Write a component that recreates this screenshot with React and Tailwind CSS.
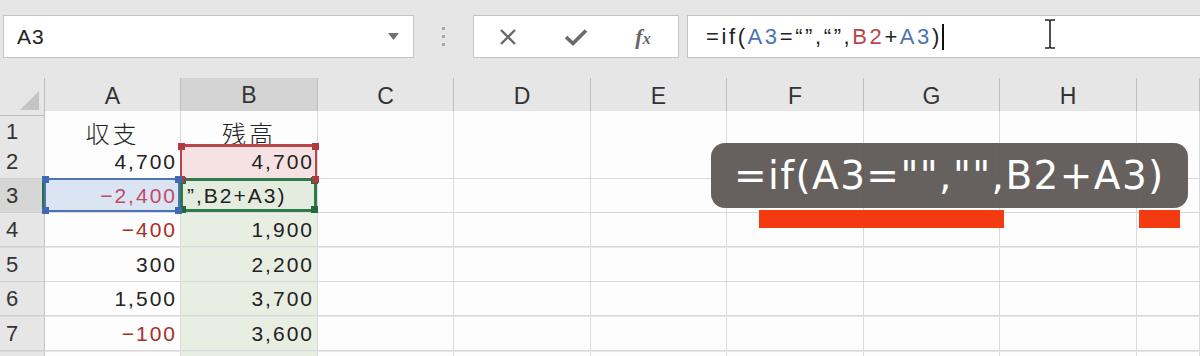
import React from 'react';

const GRID = 'grid grid-cols-[45px_136px_137px_136px_137px_136px_137px_136px_137px_63px]';
const cellFont = "font-['Liberation_Sans','Noto_Sans_CJK_JP',sans-serif]";

function Corners({ color }) {
  return (
    <>
      <span className={`absolute -left-[4px] -top-[4px] w-[7px] h-[7px] ${color}`} />
      <span className={`absolute -right-[4px] -top-[4px] w-[7px] h-[7px] ${color}`} />
      <span className={`absolute -left-[4px] -bottom-[4px] w-[7px] h-[7px] ${color}`} />
      <span className={`absolute -right-[4px] -bottom-[4px] w-[7px] h-[7px] ${color}`} />
    </>
  );
}

const rows = [
  { n: '1', h: 'h-[34px]', a: '収支', b: '残高', jp: true },
  { n: '2', h: 'h-[34px]', a: '4,700', b: '4,700', bRef: 'red' },
  { n: '3', h: 'h-[34px]', a: '−2,400', aColor: 'text-[#c24868]', b: '”,B2+A3)', active: true },
  { n: '4', h: 'h-[35px]', a: '−400', aColor: 'text-[#a5302a]', b: '1,900', tint: true },
  { n: '5', h: 'h-[34px]', a: '300', b: '2,200', tint: true },
  { n: '6', h: 'h-[35px]', a: '1,500', b: '3,700', tint: true },
  { n: '7', h: 'h-[35px]', a: '−100', aColor: 'text-[#a5302a]', b: '3,600', tint: true },
  { n: '', h: 'h-[34px]', a: '', b: '', tint: true },
];

const headers = ['A', 'B', 'C', 'D', 'E', 'F', 'G', 'H', ''];

function Row({ r }) {
  const isActive = r.active;
  const rowHead = isActive
    ? 'bg-[#d6d6d6] border-r-[3px] border-r-[#217346]'
    : 'bg-[#e6e6e6] border-r border-r-[#c2c2c2]';
  let aCell = 'bg-[#fdfdfd]';
  let bCell = 'bg-[#fdfdfd]';
  if (isActive) {
    aCell = 'bg-[#dbe4f3]';
    bCell = 'bg-[#e4ecdf]';
  }
  if (r.bRef === 'red') bCell = 'bg-[#f6e2e2]';
  if (r.tint) bCell = 'bg-[#e9eee3]';
  const textBase = `text-[21px] tracking-[2px] ${cellFont}`;
  return (
    <div className={`${GRID} ${r.h}`}>
      <div className={`${rowHead} border-b border-b-[#cfcfcf] flex items-center pl-[6px] text-[22px] text-[#333] ${cellFont}`}>
        {r.n}
      </div>
      <div className={`relative ${aCell} border-r border-b border-[#d9d9d9] flex items-center ${r.jp ? 'justify-center' : 'justify-end pr-[3px]'}`}>
        {r.jp ? (
          <span className="text-[24px] text-[#222] tracking-[3px] font-['Noto_Sans_CJK_JP',sans-serif] font-light mt-[4px]">{r.a}</span>
        ) : (
          <span className={`${textBase} ${r.aColor || 'text-[#222]'}`}>{r.a}</span>
        )}
        {isActive && (
          <div className="absolute -left-px -top-px right-0 bottom-0 border-[2px] border-[#4d74b0] z-30 pointer-events-none">
            <Corners color="bg-[#3f6ab0]" />
          </div>
        )}
      </div>
      <div className={`relative ${bCell} border-r border-b border-[#d9d9d9] flex items-center ${r.jp ? 'justify-center' : isActive ? 'justify-start pl-[6px]' : 'justify-end pr-[3px]'}`}>
        {r.jp ? (
          <span className="text-[24px] text-[#222] tracking-[3px] font-['Noto_Sans_CJK_JP',sans-serif] font-light mt-[4px]">{r.b}</span>
        ) : (
          <span className={`${textBase} text-[#222]`}>{r.b}</span>
        )}
        {r.bRef === 'red' && (
          <div className="absolute -left-px -top-px right-0 -bottom-px border-t-[3px] border-l-[2px] border-r-[2px] border-[#b5474b] z-20 pointer-events-none">
            <Corners color="bg-[#b03a3e]" />
          </div>
        )}
        {isActive && (
          <div className="absolute -left-px -top-px right-0 bottom-0 border-[3px] border-[#2f7a4b] z-10 pointer-events-none">
            <Corners color="bg-[#1f6b3c]" />
          </div>
        )}
      </div>
      {[0, 1, 2, 3, 4, 5, 6, 7].map((i) => (
        <div key={i} className="bg-[#fdfdfd] border-r border-b border-[#d9d9d9]" />
      ))}
    </div>
  );
}

export default function App() {
  return (
    <div className="relative w-[1200px] h-[356px] overflow-hidden bg-[#e6e6e6] font-['Liberation_Sans',sans-serif]">
      {/* Formula bar */}
      <div className="h-[78px] flex items-start pt-[15px]">
        <div className="ml-[3px] w-[411px] h-[43px] bg-white border border-[#c4c4c4] flex items-center justify-between pl-[13px] pr-[14px]">
          <span className="text-[21px] text-[#222] tracking-[1px]">A3</span>
          <svg width="11" height="7" viewBox="0 0 11 7">
            <path d="M0 0 H11 L5.5 7 Z" fill="#707070" />
          </svg>
        </div>
        <div className="w-[59px] h-[43px] flex flex-col items-center justify-center gap-[5px]">
          <span className="w-[3px] h-[3px] bg-[#a8a8a8]" />
          <span className="w-[3px] h-[3px] bg-[#a8a8a8]" />
          <span className="w-[3px] h-[3px] bg-[#a8a8a8]" />
        </div>
        <div className="w-[206px] h-[43px] bg-white border border-[#c4c4c4] flex items-center">
          <div className="w-[68px] flex justify-center">
            <svg width="18" height="18" viewBox="0 0 18 18">
              <path d="M2 2 L16 16 M16 2 L2 16" stroke="#6a6a6a" strokeWidth="2.4" />
            </svg>
          </div>
          <div className="w-[67px] flex justify-center">
            <svg width="24" height="18" viewBox="0 0 24 18">
              <path d="M2 9 L9 15.5 L22 2.5" stroke="#6a6a6a" strokeWidth="3.6" fill="none" />
            </svg>
          </div>
          <div className="w-[68px] flex justify-center">
            <span className="font-['Liberation_Serif',serif] italic font-bold text-[22px] text-[#666] leading-none">
              f<span className="text-[16px]">x</span>
            </span>
          </div>
        </div>
        <div className="relative ml-[8px] flex-1 h-[43px] bg-white border border-r-0 border-[#c4c4c4] flex items-center pl-[18px]">
          <span className="text-[22px] tracking-[2.6px] text-[#222]">
            =if(<span className="text-[#4a74b3]">A3</span>=“”,“”,<span className="text-[#b5474b]">B2</span>+<span className="text-[#4a74b3]">A3</span>)
          </span>
          <span className="w-[2px] h-[26px] bg-[#111]" />
          <svg className="absolute left-[355px] top-[2px]" width="14" height="32" viewBox="0 0 14 32">
            <path d="M2 2 H6 Q7 2 7 4 V28 Q7 30 6 30 H2 M12 2 H8 Q7 2 7 4 M7 28 Q7 30 8 30 H12" stroke="#222" strokeWidth="1.6" fill="none" />
          </svg>
        </div>
      </div>

      {/* Grid */}
      <div className="flex flex-col">
        <div className={`${GRID} h-[33px]`}>
          <div className="relative bg-[#e6e6e6] border-r border-b border-[#bdbdbd] flex items-end justify-end pr-[5px] pb-[5px]">
            <svg width="19" height="19" viewBox="0 0 19 19">
              <path d="M19 0 V19 H0 Z" fill="#c4c4c4" />
            </svg>
          </div>
          {headers.map((h, i) => (
            <div
              key={i}
              className={
                h === 'B'
                  ? `bg-[#d4d4d4] border-r border-[#bdbdbd] border-b-[3px] border-b-[#217346] flex items-center justify-center text-[23px] text-[#333] ${cellFont}`
                  : `bg-[#e6e6e6] border-r border-b border-[#bdbdbd] flex items-center justify-center text-[23px] text-[#333] ${cellFont}`
              }
            >
              {h}
            </div>
          ))}
        </div>
        {rows.map((r, i) => (
          <Row key={i} r={r} />
        ))}
      </div>

      {/* Caption overlay */}
      <div className="absolute left-[711px] top-[143px] w-[477px] h-[65px] rounded-[14px] bg-[#5e5955]/95 z-40 flex items-center pl-[23px]">
        <span className="font-['DejaVu_Sans',sans-serif] text-[39px] tracking-[1.4px] text-white leading-none">
          =if(A3="","",B2+A3)
        </span>
      </div>
      <div className="absolute left-[759px] top-[210px] w-[245px] h-[18px] bg-[#f43a10] z-40" />
      <div className="absolute left-[1139px] top-[210px] w-[41px] h-[18px] bg-[#f43a10] z-40" />
    </div>
  );
}
